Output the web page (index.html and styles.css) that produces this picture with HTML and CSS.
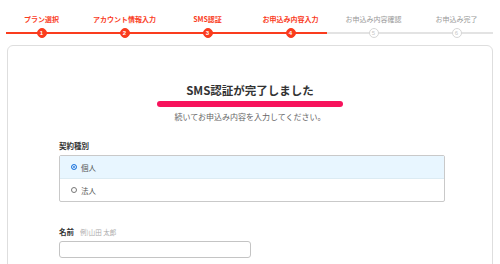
FILE: index.html
```html
<!DOCTYPE html>
<html lang="ja">
<head>
    <meta charset="UTF-8">
    <meta name="viewport" content="width=device-width, initial-scale=1.0">
    <title>お申込み内容入力</title>
    <link rel="stylesheet" href="styles.css">
</head>
<body>
    <ol class="steps">
        <li class="step done"><span class="step-label">プラン選択</span><span class="step-track"><span class="step-num">1</span></span></li>
        <li class="step done"><span class="step-label">アカウント情報入力</span><span class="step-track"><span class="step-num">2</span></span></li>
        <li class="step done"><span class="step-label">SMS認証</span><span class="step-track"><span class="step-num">3</span></span></li>
        <li class="step done current"><span class="step-label">お申込み内容入力</span><span class="step-track"><span class="step-num">4</span></span></li>
        <li class="step"><span class="step-label">お申込み内容確認</span><span class="step-track"><span class="step-num">5</span></span></li>
        <li class="step"><span class="step-label">お申込み完了</span><span class="step-track"><span class="step-num">6</span></span></li>
    </ol>

    <div class="card">
        <h1 class="card-title">SMS認証が完了しました</h1>
        <div class="title-bar"></div>
        <p class="card-lead">続いてお申込み内容を入力してください。</p>

        <div class="field">
            <div class="field-label">契約種別</div>
            <div class="radio-group">
                <label class="radio-row checked"><span class="radio on"></span>個人</label>
                <label class="radio-row"><span class="radio"></span>法人</label>
            </div>
        </div>

        <div class="field name-field">
            <div class="field-label">名前<span class="field-hint">例)山田 太郎</span></div>
            <div class="text-input"></div>
        </div>
    </div>
</body>
</html>
```

FILE: styles.css
```css
body {
    margin: 0;
    width: 500px;
    background-color: #fff;
    font-family: "Noto Sans CJK JP", "Noto Sans", sans-serif;
    color: #333;
}

.steps {
    list-style: none;
    margin: 0;
    padding: 14px 0 0 0;
    display: flex;
}

.step {
    width: 83px;
    display: flex;
    flex-direction: column;
    align-items: center;
}

.step-label {
    font-size: 7px;
    line-height: 10px;
    height: 10px;
    color: #999;
    white-space: nowrap;
}

.done .step-label {
    color: #fa3c1e;
    font-weight: bold;
}

.step-track {
    margin-top: 4px;
    width: 100%;
    height: 10px;
    display: flex;
    justify-content: center;
    align-items: center;
    background: linear-gradient(#e3e3e3, #e3e3e3) center / 100% 2px no-repeat;
}

.step:first-child .step-track {
    background-size: calc(100% - 6px) 2px;
    background-position: right center;
}

.step:last-child .step-track {
    background-size: calc(100% - 5px) 2px;
    background-position: left center;
}

.done .step-track {
    background-image: linear-gradient(#fa3c1e, #fa3c1e);
}

.current .step-track {
    background-image: linear-gradient(to right, #fa3c1e 78px, #e3e3e3 78px);
}

.step-num {
    width: 10px;
    height: 10px;
    box-sizing: border-box;
    border-radius: 50%;
    border: 1px solid #d6d6d6;
    background-color: #fff;
    color: #c8c8c8;
    font-size: 6px;
    line-height: 8px;
    text-align: center;
    font-family: "Liberation Sans", sans-serif;
}

.done .step-num {
    background-color: #fa3c1e;
    border-color: #fa3c1e;
    color: #fff;
    font-weight: bold;
}

.card {
    margin: 7px 7px 0 7px;
    padding: 36px 51px 20px 51px;
    border: 1px solid #dedede;
    border-radius: 6px;
    height: 400px;
    display: flex;
    flex-direction: column;
}

.card-title {
    margin: 0;
    font-size: 11.5px;
    line-height: 16px;
    text-align: center;
    color: #333;
}

.title-bar {
    align-self: center;
    width: 186px;
    height: 6px;
    margin: 3px 0 0 0;
    border-radius: 3px;
    background-color: #f7135c;
}

.card-lead {
    margin: 4px 0 0 0;
    font-size: 8px;
    line-height: 12px;
    text-align: center;
    color: #666;
}

.field {
    margin-top: 18px;
}

.name-field {
    margin-top: 25px;
}

.field-label {
    font-size: 7.5px;
    line-height: 10px;
    font-weight: bold;
    color: #333;
    margin-bottom: 4px;
}

.field-hint {
    font-weight: normal;
    color: #aaa;
    font-size: 6.5px;
    margin-left: 6px;
}

.radio-group {
    width: 384px;
    border: 1px solid #c9c9c9;
    border-radius: 2px;
}

.radio-row {
    height: 22px;
    display: flex;
    align-items: center;
    padding-left: 11px;
    font-size: 7.5px;
    color: #555;
    gap: 4px;
}

.radio-row + .radio-row {
    border-top: 1px solid #dcebf3;
}

.checked {
    background-color: #e8f6ff;
}

.radio {
    width: 6px;
    height: 6px;
    box-sizing: border-box;
    border-radius: 50%;
    border: 1px solid #777;
    background-color: #fff;
}

.radio.on {
    border: 1.5px solid #2a7fe0;
    background-color: #2a7fe0;
    box-shadow: inset 0 0 0 1px #fff;
}

.text-input {
    width: 192px;
    height: 17px;
    box-sizing: border-box;
    border: 1px solid #c4c4c4;
    border-radius: 3px;
}
```
